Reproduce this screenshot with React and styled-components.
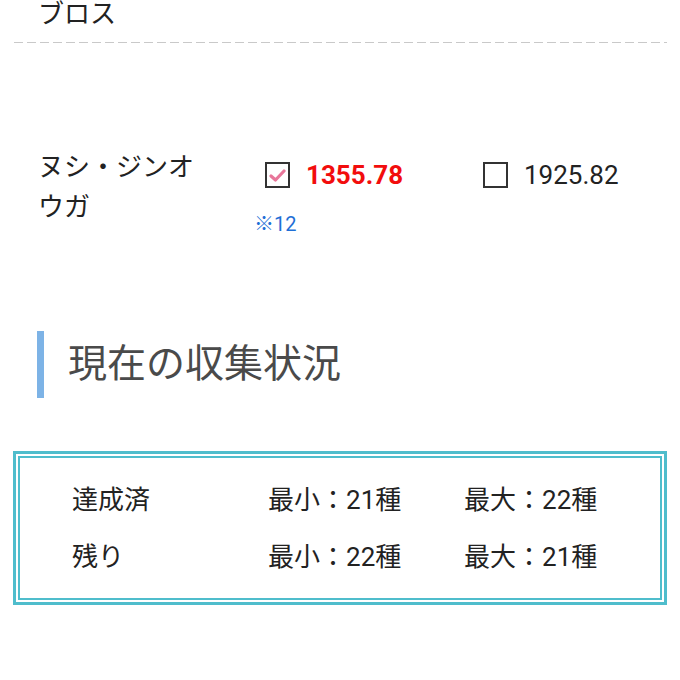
import React from "react";
import styled, { createGlobalStyle } from "styled-components";

const GlobalStyle = createGlobalStyle`
  body {
    margin: 0;
    background: #ffffff;
    font-family: Roboto, "Noto Sans CJK JP", sans-serif;
    color: #222222;
  }
`;

const Page = styled.div`
  padding: 0 13px 60px 13px;
  overflow: hidden;
`;

const PrevItem = styled.div`
  margin-top: -6px;
  padding: 0 0 9px 25px;
  font-size: 26px;
  line-height: 40px;
  background-image: linear-gradient(to right, #c9c9c9 0 9px, transparent 9px 13px);
  background-size: 13px 1px;
  background-repeat: repeat-x;
  background-position: 1px bottom;
`;

const Row = styled.div`
  margin-top: 104px;
  display: grid;
  grid-template-columns: 218px 218px 1fr;
  padding-left: 25px;
`;

const Name = styled.div`
  font-size: 26px;
  line-height: 40px;
  width: 170px;
`;

const Option = styled.div`
  display: flex;
  flex-direction: column;
  padding-top: 8px;
`;

const OptionMain = styled.label`
  display: flex;
  align-items: center;
  gap: 16px;
  margin-left: 9px;
  height: 40px;
`;

const Box = styled.span`
  width: 25px;
  height: 26px;
  box-sizing: border-box;
  border: 2px solid #333333;
  display: flex;
  align-items: center;
  justify-content: center;
  background: #fff;
`;

const Value = styled.span`
  font-size: 26px;
  line-height: 40px;
  font-weight: ${({ $picked }) => ($picked ? 700 : 400)};
  color: ${({ $picked }) => ($picked ? "#f20d0d" : "#222222")};
`;

const Note = styled.div`
  margin-top: 14px;
  margin-left: -2px;
  font-size: 20px;
  line-height: 30px;
  color: #1f6fd6;
`;

const Heading = styled.h2`
  margin: 92px 0 0 24px;
  padding-left: 24px;
  border-left: 7px solid #7db3e6;
  height: 67px;
  font-size: 39px;
  line-height: 67px;
  font-weight: 400;
  color: #4a4a4a;
`;

const StatusBox = styled.div`
  margin-top: 53px;
  border: 3px solid #4fbdcc;
  box-shadow: inset 0 0 0 2px #ffffff, inset 0 0 0 4px #4fbdcc;
  padding: 18px 0 16px 56px;
`;

const StatusRow = styled.div`
  display: grid;
  grid-template-columns: 196px 196px 1fr;
  font-size: 26px;
  line-height: 57px;
`;

const Check = () => (
  <svg width="17" height="13" viewBox="0 0 17 13">
    <path d="M2 7 L6.5 11 L15 2" fill="none" stroke="#e8769a" strokeWidth="3.2" strokeLinecap="round" strokeLinejoin="round" />
  </svg>
);

const options = [
  { value: "1355.78", picked: true, note: "※12" },
  { value: "1925.82", picked: false },
];

const status = [
  { label: "達成済", min: "21", max: "22" },
  { label: "残り", min: "22", max: "21" },
];

export default function App() {
  return (
    <>
      <GlobalStyle />
      <Page>
        <PrevItem>ブロス</PrevItem>
        <Row>
          <Name>ヌシ・ジンオウガ</Name>
          {options.map((o) => (
            <Option key={o.value}>
              <OptionMain>
                <Box>{o.picked && <Check />}</Box>
                <Value $picked={o.picked}>{o.value}</Value>
              </OptionMain>
              {o.note && <Note>{o.note}</Note>}
            </Option>
          ))}
        </Row>
        <Heading>現在の収集状況</Heading>
        <StatusBox>
          {status.map((s) => (
            <StatusRow key={s.label}>
              <span>{s.label}</span>
              <span>最小：{s.min}種</span>
              <span>最大：{s.max}種</span>
            </StatusRow>
          ))}
        </StatusBox>
      </Page>
    </>
  );
}
